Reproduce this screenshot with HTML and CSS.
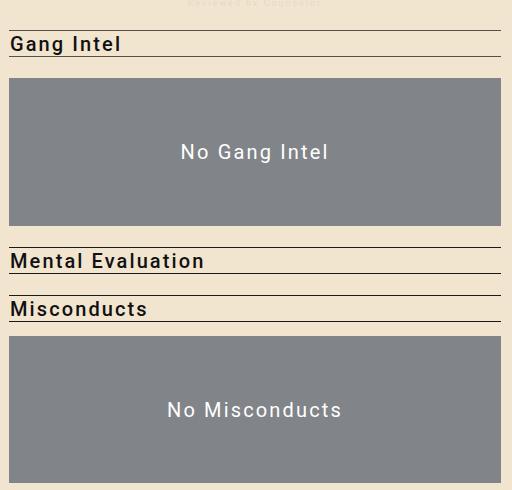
FILE: index.html
```html
<!DOCTYPE html>
<html>
<head>
<meta charset="utf-8">
<link rel="stylesheet" href="styles.css">
</head>
<body>
<div class="page">
  <div class="ghost">Reviewed by Counselor</div>
  <section class="section first">
    <h2 class="heading heading-gray">Gang Intel</h2>
    <div class="empty">No Gang Intel</div>
  </section>
  <section class="section">
    <h2 class="heading">Mental Evaluation</h2>
  </section>
  <section class="section">
    <h2 class="heading">Misconducts</h2>
    <div class="empty tight">No Misconducts</div>
  </section>
</div>
</body>
</html>
```
FILE: styles.css
```css
html, body {
  margin: 0;
  padding: 0;
  background: #f2e5d0;
}
body {
  font-family: Roboto, "Noto Sans", sans-serif;
  height: 490px;
  overflow: hidden;
}
.page {
  width: 492px;
  margin: 0 0 0 9px;
}
.ghost {
  height: 6px;
  line-height: 6px;
  overflow: hidden;
  text-align: center;
  color: #e6d9c5;
  font-size: 9px;
  letter-spacing: 2px;
  margin-bottom: 24px;
}
.section {
  margin-bottom: 21px;
}
.heading {
  margin: 0;
  height: 25px;
  border-top: 1px solid #1a1a1a;
  border-bottom: 1px solid #1a1a1a;
  font-size: 20px;
  font-weight: 500;
  line-height: 26px;
  letter-spacing: 2.1px;
  color: #111;
  padding-left: 1px;
}
.heading-gray {
  border-color: #555049;
}
.empty {
  margin-top: 21px;
  height: 148px;
  background: #818489;
  color: #fff;
  display: flex;
  align-items: center;
  justify-content: center;
  font-size: 20px;
  letter-spacing: 2.15px;
}
.empty.tight {
  margin-top: 14px;
  height: 147px;
}
```
